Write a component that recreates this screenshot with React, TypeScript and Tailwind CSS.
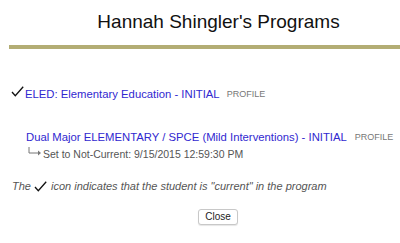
import React from "react";

const font = { fontFamily: '"Liberation Sans", Arial, sans-serif' };

function Check({ className }: { className?: string }) {
  return (
    <svg className={className} viewBox="0 0 13 11" width="13" height="11">
      <path d="M1 6 L4.3 9.8 L12.2 0.8" fill="none" stroke="#111" strokeWidth="1.3" />
    </svg>
  );
}

export default function App() {
  return (
    <div className="w-[400px] h-[243px] bg-white overflow-hidden whitespace-nowrap" style={font}>
      <h1 className="pt-[10px] pl-[37px] text-center text-[19px] leading-[24px] text-[#111]">
        Hannah Shingler's Programs
      </h1>
      <div className="mt-[11px] ml-[9px] h-[4px] bg-[#b3ad74]" />
      <div className="mt-[37px] pl-[11px] flex items-end">
        <Check className="mb-[4px]" />
        <span className="ml-[1px] text-[11.3px] leading-[14px] text-[#3128d0]">
          ELED: Elementary Education - INITIAL
        </span>
        <span className="ml-[7px] text-[9px] leading-[13px] text-[#777]">PROFILE</span>
      </div>
      <div className="mt-[29px] pl-[26px] flex items-end">
        <span className="text-[11.3px] leading-[14px] text-[#3128d0]">
          Dual Major ELEMENTARY / SPCE (Mild Interventions) - INITIAL
        </span>
        <span className="ml-[8px] text-[9px] leading-[13px] text-[#777]">PROFILE</span>
      </div>
      <div className="mt-[4px] pl-[28px] flex items-center">
        <svg width="14" height="10" viewBox="0 0 14 10" className="-mt-[5px]">
          <path d="M1 0 V6 H11" fill="none" stroke="#777" strokeWidth="1" />
          <path d="M10 3.5 L13 6 L10 8.5 Z" fill="#777" />
        </svg>
        <span className="ml-[1px] text-[10.5px] leading-[12px] text-[#555]">
          Set to Not-Current: 9/15/2015 12:59:30 PM
        </span>
      </div>
      <div className="mt-[19px] pl-[12px] flex items-center text-[11px] leading-[14px] italic text-[#555]">
        <span>The</span>
        <Check className="ml-[3px] mr-[4px]" />
        <span>icon indicates that the student is "current" in the program</span>
      </div>
      <div className="mt-[16px] flex justify-center">
        <button className="ml-[36px] h-[16px] px-[6px] text-[10px] leading-[14px] text-[#222] bg-white border border-[#c8c8c8] rounded-[3px] shadow-[0_1px_1px_rgba(0,0,0,0.1)]">
          Close
        </button>
      </div>
    </div>
  );
}
